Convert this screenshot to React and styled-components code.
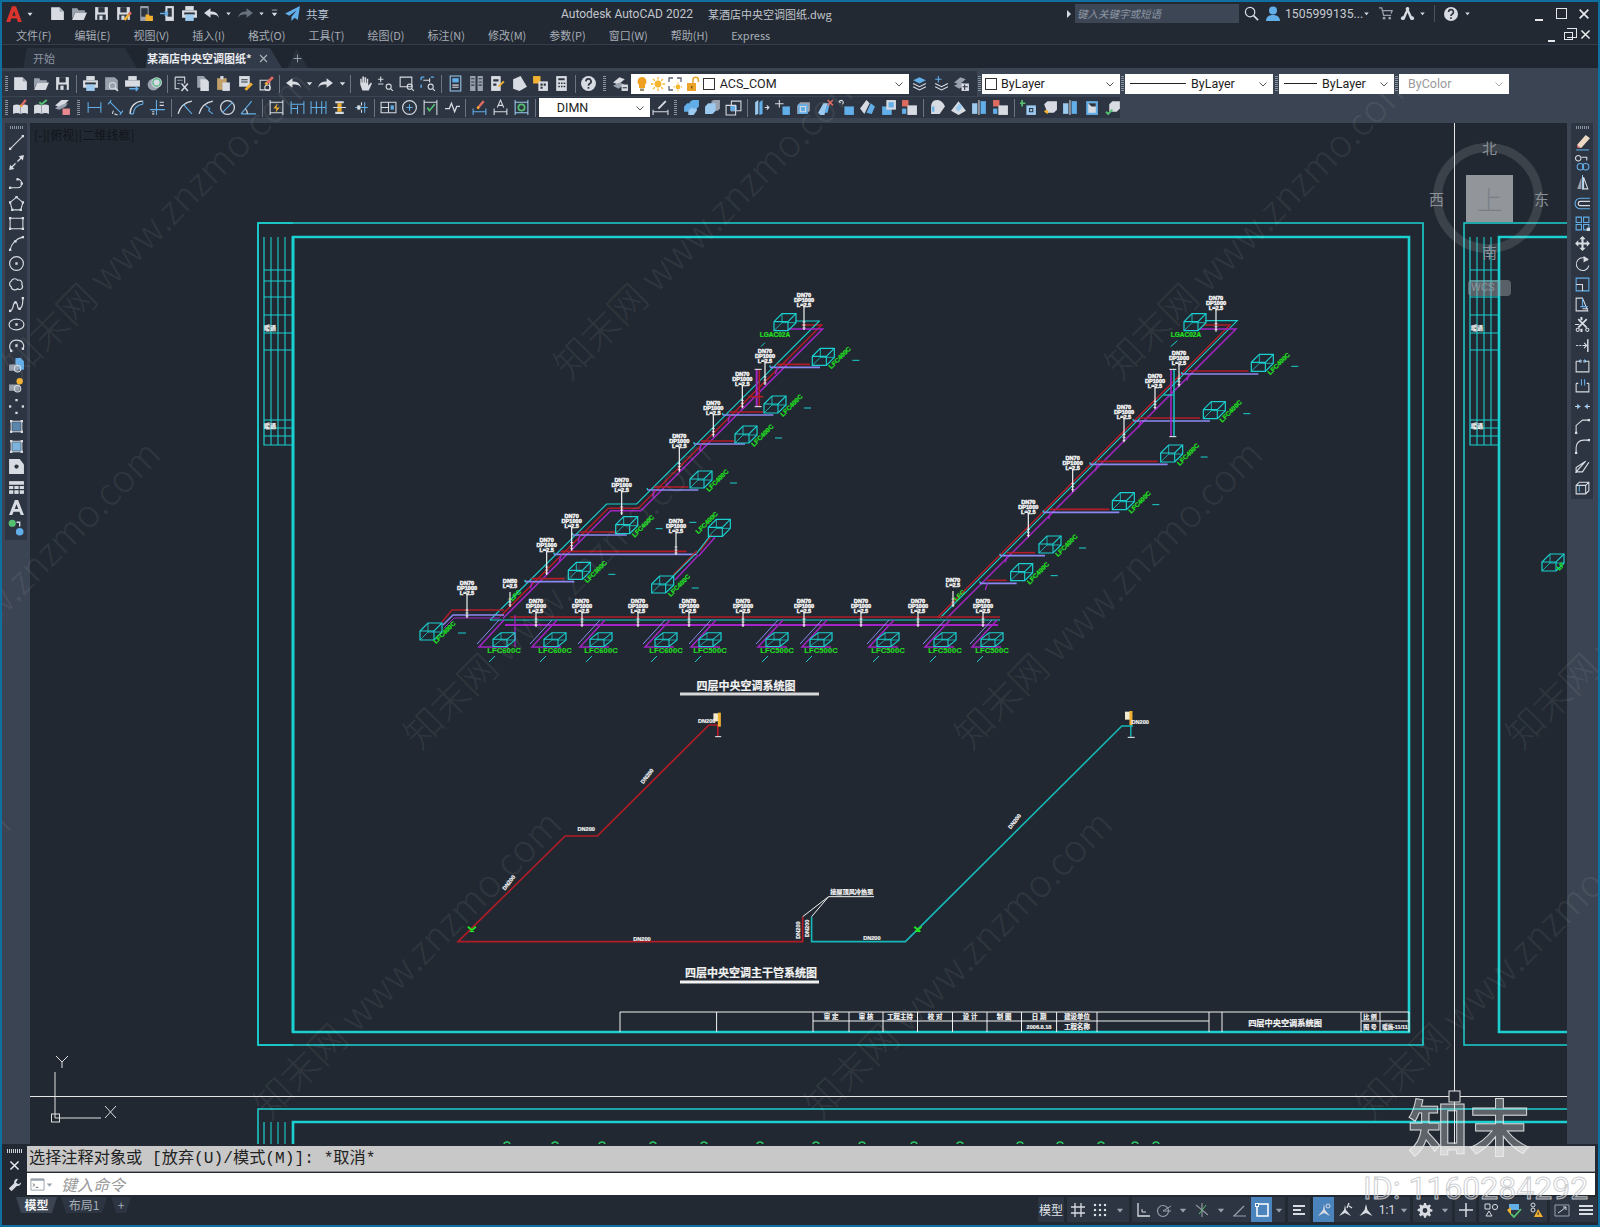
import React from 'react'
import styled, { createGlobalStyle } from 'styled-components'

const UI = `"Noto Sans CJK SC", "Noto Sans", sans-serif`
const LAT = `Roboto, "Noto Sans CJK SC", sans-serif`

const W = '#d8dce2', G = '#98a1ad', B = '#62aee8', Y = '#f0b030', R = '#df6a60', N = '#55c070', K = '#2c3440', C = '#9cc9ee', DIM = '#68717e'
const s = (d, c = W, w) => ({ d, c, w })
const f = (d, c = W) => ({ d, c, fill: true })
const dot = (x, y, c = W) => f(`M${x - 1.1} ${y - 1.1}h2.2v2.2h-2.2z`, c)
const circle = (x, y, r) => `M${x - r} ${y}a${r} ${r} 0 1 0 ${2 * r} 0a${r} ${r} 0 1 0 ${-2 * r} 0`
const save = [f('M2 2h12v12H2z'), f('M5 2h6v5H5z', K), f('M4 9h8v5H4z', K), f('M6 10h3v4H6z')]
const mag = [s(circle(11, 11, 2.4), W), s('M13 13l2 2')]
const dimH = [s('M2 3v10M14 3v10M2 8h12', B)]

const ICONS = {
  logo: [f('M6.2 1h3.6L15 15h-3.6l-1-3H5.6l-1 3H1z', '#d9352c'), f('M8 5.5L6.6 9.5h2.8z', '#222933')],
  caret: [f('M4 6h8l-4 5z')],
  menuC: [s('M4 3h8'), f('M4 7h8l-4 5z')],
  newf: [f('M2 2h8l4 4v8H2z'), f('M10 2v4h4z', G)],
  open: [f('M1 3h5l1 2h6v2H4l-3 6z', G), f('M4 7h11l-3 7H1z')],
  save,
  saveas: [...save, s('M9 14l5-6', Y, 2.4), s('M13 9l2-2', R, 2.4)],
  sheet: [f('M3 1h8v14H3z', G), f('M4 3h6v8H4z', K), f('M8 9h3l1 1h3v5H8z', Y)],
  sheetout: [f('M6 1h8v14H6z'), f('M8 3h4v8H8z', K), s('M1 8h7M5.5 5.5L8 8l-2.5 2.5', B, 1.5)],
  print: [f('M4 1h8v4H4z'), f('M1 5h14v7H1z'), f('M3 7h10v2H3z', K), f('M4 9h8v6H4z', C)],
  undo: [f('M7 3v3c4 0 7 1 8 6-2-3-4-3-8-3v3L1 7.5z')],
  redo: [f('M9 3v3C5 6 2 7 1 12c2-3 4-3 8-3v3l6-4.5z')],
  redoD: [f('M9 3v3C5 6 2 7 1 12c2-3 4-3 8-3v3l6-4.5z', DIM)],
  share: [f('M15 1L1 8l4 2 7-5-5 6v4l3-3 3 2z', B)],
  preview: [f('M2 2h9l3 3v9H2z', G), s(circle(9, 10, 3)), s('M11 12l3 3', W, 1.6)],
  plot: [f('M4 1h8v4H4z'), f('M1 5h14v6H1z'), s('M5 13h8M11 11l2 2-2 2', B, 1.4)],
  globe: [f(circle(7, 9, 5.5), G), f(circle(10, 7, 5), W), s(circle(10, 7, 3.5), '#5bb88a', 1.4)],
  cut: [s('M2 2h9v6M2 2v11h4'), s('M8 8l6 7M14 8l-6 7', W, 1.4), s('M4 5h5M4 8h3', G)],
  copy: [f('M3 1h6l2 2v9H3z', G), f('M6 4h6l2 2v9H6z')],
  paste: [f('M2 3h9v11H2z', '#c2a06a'), f('M5 1h3v3H5z'), f('M7 7h7v8H7z')],
  match: [f('M2 1h10v10H2z'), f('M4 4h6v1H4zM4 6h6v1H4z', K), s('M8 14l6-6', Y, 2.6)],
  brush: [s('M2 5h9v9H2z'), s(circle(9, 12, 2.6)), s('M8 8l6-6', R, 2.6), s('M7 9l1.6-1.6', Y, 2.6)],
  hand: [f('M4 9V3.5h1.4V7H6V1.5h1.5V7H8V2h1.5v5.5h.6V3.5h1.4V10L14 7l1 1-3 6.5H6z')],
  zoomrt: [s('M1 4h5M3.5 1.5v5M1 8.5h5'), ...mag],
  zoomw: [s('M2 2h11v9H2z'), ...mag],
  zoomp: [s('M2 2v3M2 2h3M14 2h-3M2 12v-3', B, 1.3), s('M4 5l6 0M10 3v4', W), ...mag],
  palette: [s('M3 1h10v14H3z', C), f('M5 3h6v4H5z', B), f('M5 9h6v1H5zM5 11h6v1H5z')],
  cols: [f('M2 1h5v14H2zM9 1h5v14H9z', G), f('M3 3h3v1H3zM3 6h3v1H3zM3 9h3v1H3zM10 3h3v1h-3zM10 6h3v1h-3zM10 9h3v1h-3z', K)],
  sheetset: [f('M2 1h9v14H2z'), f('M4 4h5v2H4zM4 8h3v2H4z', K), s('M9 11l5-5', Y, 1.8)],
  tag: [f('M2 4l7-3 6 10-7 4-6-2z')],
  layers2: [f('M1 1h7v7H1z', Y), f('M6 6h9v9H6z'), f('M8 8h2v2H8zM11 8h2v2h-2zM8 11h2v2H8z', K)],
  calc: [f('M3 1h10v14H3z'), f('M5 3h6v2H5zM5 7h1.5v1.5H5zM7.5 7H9v1.5H7.5zM10 7h1.5v1.5H10zM5 10h1.5v1.5H5zM7.5 10H9v1.5H7.5zM10 10h1.5v1.5H10z', K)],
  help: [f(circle(8, 8, 7)), s('M5.6 6a2.4 2.4 0 1 1 3.4 2.2c-.7.4-1 .8-1 1.8', K, 1.6), f('M7.2 11.3h1.6v1.6H7.2z', K)],
  layerprop: [f('M1 7l6-5 5 2-6 5z'), f('M1 10l6-3 5 2-6 4z', G), f('M9 9h6v6H9z'), s('M10 12h4', K)],
  bulb: [f('M8 1a4.5 4.5 0 0 1 3 7.8V12H5V8.8A4.5 4.5 0 0 1 8 1z', '#f0a020'), f('M6 12.5h4V15H6z', '#9a8b6a')],
  sun: [f(circle(8, 8, 3.4), '#f5b52e'), s('M8 1v2.5M8 12.5V15M1 8h2.5M12.5 8H15M3 3l1.8 1.8M11.2 11.2L13 13M3 13l1.8-1.8M11.2 4.8L13 3', '#f5b52e', 1.3)],
  freeze: [s('M2 6V2h4M10 2h4v4M2 10v4h4', '#596270', 1.3), f(circle(11, 11, 2.4), '#f5b52e'), s('M11 6.5v1.4M11 14v1.4M6.5 11h1.4M14 11h1.4', '#f5b52e')],
  lock: [f('M2 7h9v8H2z', '#eba32a'), s('M8 7V4a2.7 2.7 0 0 1 5.4 0v2', '#eba32a', 1.5), f('M6 10h1.4v2.5H6z', '#7a5010')],
  lay1: [f('M2 5l6-3 6 3-6 3z', B), s('M2 8l6 3 6-3M2 11l6 3 6-3', W)],
  lay2: [s('M3 4h6M6 1v6', B), s('M3 8l6 3 6-3M3 11l6 3 6-3')],
  lay3: [f('M1 7l6-5 5 2-6 5z', G), f('M1 10l6-3 5 2-6 4z', G), f('M8 8h7v7H8z'), s('M9 11h5M11 9v5', K)],
  note: [f('M1 6c2-1 5-1 7 0 2-1 5-1 7 0v8c-2-1-5-1-7 0-2-1-5-1-7 0z'), s('M8 6v8', G), s('M8 7l5-6', R, 2.2), s('M8 7l1-1.2', Y, 2.2)],
  noteok: [f('M1 6c2-1 5-1 7 0 2-1 5-1 7 0v8c-2-1-5-1-7 0-2-1-5-1-7 0z'), s('M8 6v8', G), s('M6 3l2 2 5-4', N, 1.8)],
  stackr: [f('M1 9l6-5h6l-2 3-6 3z', G), f('M1 6l6-5h7l-3 3-7 3z'), f('M8 9h7v6H8z', '#e88a90')],
  dimH,
  dimA: [s('M4 1L1 5M15 11l-3 4M3 3l10 10', B), s('M6 11l-1 3M10 15l-3-1', W)],
  dimArc: [s('M2 14c0-7 5-12 12-12', W, 1.4), s('M2 14h3M14 2v3M5 14c0-5 4-9 9-9', B)],
  dimOrd: [s('M7 1v14M1 10h14', B), s('M10 3h4M10 6h4M3 12h2M3 14h2', W)],
  dimRad: [s('M1 14C3 7 8 3 14 2', W, 1.2), s('M14 14L6 5', B)],
  dimJog: [s('M1 14C3 7 8 3 14 2', W, 1.2), s('M14 14l-4-3 1-2-4-3', B)],
  dimDia: [s(circle(8, 8, 6.5), W, 1.2), s('M3 13L13 3', B)],
  dimAng: [s('M1 14h14M1 14L11 2', B), s('M7 14c0-2-1-4-2-5', W)],
  dimQ: [s('M2 1v14M14 1v14M2 3h12M2 13h12', W), f('M9 4L5 9h3l-1 4 4-5H8z', Y)],
  dimBase: [s('M2 2v12M8 6v8M14 2v12M2 5h12M2 9h6', B)],
  dimCont: [s('M1 2v12M6 2v12M11 2v12M15 2v12M1 8h14', B)],
  dimSp: [f('M4 2h8v2H4zM4 12h8v2H4z'), f('M6 4h4v8H6z', Y), s('M2 8h12', W)],
  dimBr: [s('M2 8h12M11 3v10', B), s('M8 3v3M8 10v3', W), f('M4 6h3v4H4z')],
  tol: [s('M1 3h14v10H1z'), s('M8 3v10M1 8h7', W), f('M10 6h3v4h-3z', B)],
  center: [s(circle(8, 8, 6.5), W, 1.1), s('M8 5v6M5 8h6', B)],
  insp: [s('M2 1v14M14 1v14M2 3h12', W), s('M5 8l2 3 5-6', N, 1.6)],
  jogL: [s('M1 9h4l2-5 3 8 2-5h3', W, 1.2)],
  dedit: [s('M2 9v6M14 9v6M2 12h12', B), s('M6 9l6-7', R, 2.2), s('M6 9l1.5-1.6', Y, 2.2)],
  dtext: [s('M2 9v6M14 9v6M2 12h12', W), s('M5 8l3-7 3 7M6 6h4', W)],
  dupd: [s('M2 1v14M14 1v14M2 3h12M2 13h12', C), s(circle(8, 8, 3), N, 1.6)],
  dstyle: [s('M1 10v5M15 10v5M1 12h14', W), s('M6 9l7-7', W, 1.8)],
  sUnion: [f('M1 7l3-3h5v5l-3 3H1z', B), f('M5 11l3-3h5v3l-3 4H5z', C), f('M6 3l3-2h6v6l-2 2H9z', B)],
  sSub: [f('M7 2l2-1h6v8l-2 2H7z', G), f('M1 7l3-3h7v7l-3 3H1z', C)],
  sInt: [s('M6 2h9v9H6z'), f('M5 6h6v5H5z', B), s('M1 6h9v9H1z')],
  sPress: [f('M2 3l3-2v13l-3 1z', C), f('M6 3l3-2v13l-3 1z', B), s('M11 8h4M13 6l2 2-2 2')],
  sMove: [s('M5 1v7M1 4.5h8'), f('M8 7h7v8H8z', B)],
  sBox: [f('M2 6l3-3h9v8l-3 3H2z', G), f('M3 5h9v9H3z', B), s('M5 7h5v5H5z')],
  sDel: [f('M1 13l5-9h4l-3 11H3z', C), f('M7 13l3-9h2l-2 9z', B), s('M10 1l5 5M15 1l-5 5', R, 1.4)],
  sRot: [s('M1 3a2 2 0 1 1 3 2M1 3h2'), f('M6 7h9v8H6z', B)],
  sTilt: [f('M1 9l6-8 3 3-5 10z'), f('M7 13l4-9 4 3-3 7z', B)],
  sCopy: [f('M2 7h9v8H2z', B), f('M6 1h9v9H6z', W), f('M8 3h5v5H8z', B)],
  sCol: [f('M1 1h6v6H1z', R), f('M6 6h9v9H6z', W), f('M1 9h4v5H1z', B)],
  sCur: [f('M2 14V6a6 6 0 0 1 6-5c3 0 6 3 7 6l-5 7z'), s('M4 12V7', B, 2)],
  sEra: [f('M1 11l7-9 7 9-7 4z'), f('M5 9l4-5 3 3-4 5z', C)],
  sSplit: [f('M1 4h5v10H1z', C), f('M9 2h5v12H9z', B), s('M7.5 1v14')],
  sAdd: [s('M2 1v6M-1 4h6', N, 1.6), f('M6 6h9v9H6z', C), s('M9 9h3v3H9z', K)],
  sShell: [f('M3 2h11v13H3z', B), f('M5 4h7v9H5z'), f('M5 4l3 3h4V4z', K)],
  sSweep: [f('M3 5l3-3h9v8l-3 3H6z'), f('M3 12a2 2 0 1 1 3 2z', Y)],
  sChk: [f('M4 5l3-3h7v7l-3 3H4z'), s('M1 12l2 2 4-4', N, 1.8)],
  line: [s('M2 14L14 2'), dot(2, 14), dot(14, 2)],
  xline: [s('M3 13L13 3', W, 1.2), f('M15 1l-1 5-4-4zM1 15l5-1-4-4z'), dot(8, 8, K)],
  pline: [s('M2 13h7c5 0 5-8 0-8'), dot(2, 13), dot(9, 5), dot(13, 9)],
  polygon: [s('M8 2l6 5-2 7H4L2 7z'), dot(8, 2), dot(14, 7), dot(2, 7), dot(4, 14), dot(12, 14)],
  rect: [s('M2 3h12v10H2z'), dot(2, 3), dot(14, 3), dot(2, 13), dot(14, 13)],
  arc: [s('M2 14C3 8 8 3 14 2'), dot(2, 14), dot(7, 6), dot(14, 2)],
  circle: [s(circle(8, 8, 6.5), W, 1.1), dot(8, 8)],
  cloud: [s('M3 5c1-3 5-3 6-1 3-1 5 2 4 4 2 3-1 6-4 4-2 2-6 1-6-2-2-1-2-4 0-5z', W, 1.1)],
  spline: [s('M2 14c4-1 2-8 5-8s1 7 4 6 3-9 3-10', W, 1.1), dot(2, 14), dot(7, 6), dot(11, 12), dot(14, 2)],
  ellipse: [s('M1 8c0-3 3-5 7-5s7 2 7 5-3 5-7 5-7-2-7-5z', W, 1.1), dot(8, 8)],
  ellarc: [s('M3 13C0 9 2 3 8 3s8 5 6 8', W, 1.1), dot(8, 8), dot(3, 13), dot(14, 11)],
  insert: [f('M7 1h5l3 3v8H7z', B), f('M1 7h9v6H1z', G), s(circle(9, 11, 3))],
  block: [f('M1 7h10v6H1z', G), f(circle(11, 4, 3), Y), s(circle(9, 11, 3))],
  point: [dot(8, 2), dot(2, 8), dot(14, 8), dot(8, 14)],
  hatch: [s('M3 3h10v10H3z'), f('M4 4h8v8H4z', '#5a86ac'), dot(3, 3), dot(13, 3), dot(3, 13), dot(13, 13)],
  grad: [s('M3 3h10v10H3z'), f('M4 4h8v8H4z', '#7eb3dd'), dot(3, 3), dot(13, 3), dot(3, 13), dot(13, 13)],
  region: [f('M1 1h10l4 5v9H1z'), f(circle(8, 8, 2), K)],
  table: [f('M1 2h14v12H1z'), s('M1 6h14M1 10h14M5.5 6v8M10.5 6v8', K)],
  mtext: [f('M6.5 1h3L15 15h-3l-1.2-3H5.2L4 15H1zM8 5L6.3 9.5h3.4z')],
  addsel: [f(circle(4, 4, 3.4), N), s('M8 3h3v4', W, 1.3), f(circle(11, 12, 3.6), B)],
  erase: [s('M2 15h12', B), f('M3 10l8-9 4 3-8 9H4z', '#ecd9c4'), f('M3 10l3 3H3z', R)],
  ocopy: [s(circle(4, 4, 2.6)), s('M7 3h5v3'), s(circle(6, 12, 3), B), s(circle(11, 12, 3), B)],
  mirror: [f('M3 14L7 3v11z', G), s('M13 14L9 3v11z', W), s('M8 1v14', C)],
  offset: [s('M15 3H6a4.5 4.5 0 0 0 0 10h9', B), s('M15 6H6a2 2 0 0 0 0 4h9')],
  array: [s('M2 2h5v5H2zM9 2h5v5H9zM2 9h5v5H2zM9 9h5v5H9z', B), f('M12 12h3v3h-3z')],
  move: [f('M8 1l3 3H9v3h3V5l3 3-3 3V9H9v3h2l-3 3-3-3h2V9H4v2L1 8l3-3v2h3V4H5z')],
  rotate: [s('M13 5a6 6 0 1 0 1 5'), f('M9 1l5 3-5 3z')],
  scale: [s('M2 2h12v12H2z', B), s('M2 8h6v6')],
  stretch: [s('M2 2h6l5 12H2z'), s('M8 2v8M6 10h7', B), s('M8 12h5', W)],
  trim: [s('M7 1v3M7 12v3', W, 2), s('M1 8h4', W), s('M4 3l8 8M12 3l-8 8', W, 1.6), s(circle(3.5, 13, 1.5)), s(circle(12.5, 13, 1.5))],
  extend: [s('M13 2v12', W, 1.4), s('M2 8h2M5 8h2M8 8h4M9.5 5.5L12 8l-2.5 2.5')],
  break1: [s('M2 4v10h12V4H10M2 4h4'), dot(6, 4), dot(10, 4), s('M10 2v3M6 2v3', B)],
  break2: [s('M2 6v8h12V6M2 6h2M12 6h2'), s('M7 2v6M10 2v6', B)],
  join: [s('M1 8h5M10 8h5', W), f('M6 8l-3-2.5v5zM10 8l3-2.5v5z', C)],
  chamfer: [s('M2 14V7l6-5h6', W), dot(2, 14), dot(14, 2)],
  fillet: [s('M2 14V9c0-4 3-7 7-7h5', W), dot(2, 14), dot(14, 2)],
  pedit: [s('M2 14V9l9-6-9 10h6l6-9', W, 1.1)],
  explode: [s('M2 6l3-3h9v8l-3 3H2zM2 6h9v8M11 6l3-3'), s('M5 6v6', B)],
  search: [s(circle(6.5, 6.5, 5), W, 1.3), s('M10 10l5 5', W, 1.8)],
  user: [f(circle(8, 4.5, 4), B), f('M1 15c0-4 3-6 7-6s7 2 7 6z', B)],
  cart: [s('M1 2h3l2 8h8M5 5h10l-1 3', G, 1.4), f(circle(6.5, 13, 1.5), G), f(circle(12.5, 13, 1.5), G)],
  aIcon: [f('M8 1L14 14H11L8 7 5 14H2z'), f(circle(3, 13, 2)), f(circle(13, 13, 2)), f(circle(8, 3, 2))],
  cmdbox: [s('M1 2h14v12H1z', G), f('M1 2h14v2H1z', G), s('M3 7l2 1.5L3 10M6 11h3', '#666')],
  wrench: [f('M11 1a4 4 0 0 0-4 5L1 12l3 3 6-6a4 4 0 0 0 5-4l-3 2-3-2 2-3z')],
  close: [s('M3 3l10 10M13 3L3 13', W, 1.8)],
  grid: [s('M5 1v14M11 1v14M1 5h14M1 11h14', W, 1.3)],
  dots: [dot(3, 3), dot(8, 3), dot(13, 3), dot(3, 8), dot(8, 8), dot(13, 8), dot(3, 13), dot(8, 13), dot(13, 13)],
  ortho: [s('M3 1v13h12', W, 1.3), s('M7 7v3h4', W, 1)],
  polar: [s(circle(7, 9, 5.5), G, 1.1), s('M7 9l8-5M7 9h8', G)],
  iso: [s('M8 1v14M2 3l12 10', '#8d949e', 1.2), s('M12 3L5 12', N, 1)],
  snapang: [s('M1 14h13M2 14L12 4', G, 1.2)],
  osnap: [s('M3 2h11v12H3z', '#fff', 1.5), f('M1 1h4v4H1z', '#fff'), f('M2 2h2v2H2z', '#3c78b8')],
  lwt: [f('M2 3h12v2H2z'), f('M2 7h8v2H2z'), f('M2 11h12v2H2z')],
  anno: [f('M8 2l1 6 5 6-6-3-6 3 5-6z'), s(circle(12, 4, 2))],
  anno2: [f('M8 3l1 5 5 6-6-3-6 3 5-6z'), s('M12 1l-2 5M12 4l3 2', '#d8dce2', 1.4)],
  anno3: [f('M8 2l1.5 6 5 6-6.5-3-6.5 3 5-6z')],
  gear: [f('M7 1h2l.4 2 1.5.6L12.6 2.4 14 3.8 12.8 5.5l.6 1.5 2 .4v2l-2 .4-.6 1.5 1.2 1.7-1.4 1.4-1.7-1.2-1.5.6-.4 2H7l-.4-2-1.5-.6-1.7 1.2L2 12.6l1.2-1.7-.6-1.5-2-.4v-2l2-.4.6-1.5L2 3.8 3.4 2.4l1.7 1.2L6.6 3z'), f(circle(8, 8.5, 2.4), K)],
  plus: [s('M8 1v14M1 8h14', W, 1.5)],
  isodraft: [s('M2 2h5v5H2z'), s('M3 14l3-5 3 5z'), s(circle(12, 5, 2.6))],
  hw: [f('M3 2h10v6H3z', B), f('M1 8l4-3v8z', Y), s('M5 12l3 3 7-8', N, 1.8)],
  clean: [s(circle(5, 3, 2)), s(circle(5, 8, 2)), f('M10 7l5 8H6z', Y), f('M9.6 10h1v3h-1z', K)],
  iso2: [s('M1 3h14v11H1z', G), s('M7 9l5-4M9 5h3v3M4 11l3-2', W)],
  custom: [f('M1 3h14v2H1zM1 7h14v2H1zM1 11h14v2H1z')],
  caretS: [f('M3 6h10l-5 6z', G)],
}

const Svg = styled.svg`
  display: block;
  flex: none;
`

const Icon = ({ name, size = 17, color }) => (
  <Svg width={size} height={size} viewBox="0 0 16 16">
    {(ICONS[name] || []).map((p, i) => (
      <path
        key={i}
        d={p.d}
        fill={p.fill ? color || p.c : 'none'}
        stroke={p.fill ? 'none' : color || p.c}
        strokeWidth={p.w || 1}
      />
    ))}
  </Svg>
)

const GlobalStyle = createGlobalStyle`
  html, body { margin: 0; padding: 0; background: #222933; }
  * { box-sizing: border-box; }
`

const Root = styled.div`
  position: relative;
  width: 1600px;
  height: 1227px;
  overflow: hidden;
  border: 2px solid #0e6fa0;
  background: #222933;
  display: grid;
  grid-template-rows: 23px 20px 23px 55px 1021px 52px 29px;
  font-family: ${UI};
`

const TitleBar = styled.div`
  display: flex;
  align-items: center;
  padding-right: 3px;
`

const Cell = styled.div`
  width: ${p => p.$w || 21.2}px;
  flex: none;
  display: flex;
  align-items: center;
  justify-content: center;
  margin-left: ${p => p.$ml || 0}px;
`

const QuickAccess = styled.div`
  display: flex;
  align-items: center;
  padding-left: 2px;
  width: 327px;
  flex: none;
`

const ShareText = styled.span`
  font-size: 11.5px;
  color: #b8c6d6;
  margin-left: 3px;
  white-space: nowrap;
`

const TitleSlot = styled.div`
  width: 734px;
  flex: none;
  padding-left: 232px;
  color: #c2c6cc;
  white-space: nowrap;
  font-size: 11px;
  display: flex;
  align-items: center;
  gap: 15px;
`

const TitleApp = styled.span`
  font-family: ${LAT};
  font-size: 12px;
`

const SearchBox = styled.div`
  width: 164px;
  height: 19px;
  margin-left: 4px;
  background: #3d4655;
  color: #8d96a3;
  font-style: italic;
  font-size: 10.5px;
  line-height: 19px;
  padding-left: 2px;
`

const Arrow = styled.div`
  width: 0;
  height: 0;
  margin-left: 4px;
  border-left: 4px solid #d8dce2;
  border-top: 4px solid transparent;
  border-bottom: 4px solid transparent;
`

const UserName = styled.span`
  width: 76px;
  margin-left: 1px;
  font-family: ${LAT};
  font-size: 12.2px;
  color: #c6cad0;
  white-space: nowrap;
`

const VRule = styled.div`
  width: 1px;
  height: 17px;
  margin: 0 6px 0 8px;
  background: #4a5362;
`

const WinControls = styled.div`
  margin-left: auto;
  display: flex;
  align-items: center;
`

const WinBtn = styled.div`
  width: ${p => p.$w || 23}px;
  flex: none;
  display: flex;
  justify-content: center;
  align-items: center;
  height: 14px;
`

const MinGlyph = styled.div`
  width: ${p => p.$w || 8}px;
  height: 2px;
  background: #e4e6ea;
  align-self: flex-end;
`

const MaxGlyph = styled.div`
  width: 11px;
  height: 11px;
  border: 1.5px solid #e4e6ea;
`

const RestoreGlyph = styled.div`
  position: relative;
  width: 9px;
  height: 8px;
  margin-top: 3px;
  border: 1.5px solid #e4e6ea;
  &::after {
    content: '';
    position: absolute;
    left: 2px;
    top: -5px;
    width: 9px;
    height: 8px;
    border: 1.5px solid #e4e6ea;
    border-left: 0;
  }
`

const MenuBar = styled.div`
  display: flex;
  align-items: center;
  gap: 23px;
  padding: 0 4px 0 14px;
  font-size: 11px;
  color: #a7adb6;
  border-bottom: 1px solid #343c49;
`

const MenuItem = styled.span`
  white-space: nowrap;
`

const TabBar = styled.div`
  display: flex;
  align-items: flex-end;
  background: #1f2630;
  padding: 3px 0 0 14px;
  font-size: 11px;
`

const Tab = styled.div`
  height: 20px;
  width: ${p => p.$w}px;
  margin-left: ${p => p.$ml || 0}px;
  padding-left: ${p => p.$pl || 0}px;
  display: flex;
  align-items: center;
  white-space: nowrap;
  color: ${p => (p.$active ? '#e8eaee' : '#8d95a1')};
  font-weight: ${p => (p.$active ? 700 : 400)};
  background: ${p => (p.$active ? '#323b49' : '#29313d')};
  clip-path: polygon(6% 100%, 11px 0, calc(100% - 12px) 0, 100% 100%);
`

const TabClose = styled.span`
  margin-left: 6px;
  display: flex;
`

const Band = styled.div`
  background: #3b4452;
  padding-top: 3px;
  display: flex;
  flex-direction: column;
  gap: 1px;
`

const BandRow = styled.div`
  display: flex;
  align-items: center;
  height: ${p => p.$h}px;
`

const Toolbar = styled.div`
  display: flex;
  align-items: center;
  height: 100%;
  background: #2d3542;
  width: ${p => p.$w}px;
  flex: none;
`

const Grip = styled.div`
  flex: none;
  width: ${p => p.$w || 8}px;
  height: 15px;
  display: flex;
  justify-content: center;
  &::before {
    content: '';
    width: 3px;
    height: 100%;
    background: repeating-linear-gradient(to bottom, #8a93a0 0 1px, transparent 1px 2px);
  }
`

const Sep = styled.div`
  flex: none;
  width: 6.3px;
  height: 18px;
  display: flex;
  justify-content: center;
  &::before {
    content: '';
    width: 1px;
    height: 100%;
    background: #6a7482;
  }
`

const Drop = styled.div`
  flex: none;
  width: ${p => p.$w}px;
  height: ${p => p.$h || 20}px;
  background: #fff;
  display: flex;
  align-items: center;
  padding: 0 5px 0 ${p => p.$pl || 2}px;
  font-family: ${LAT};
  font-size: 12.5px;
  color: ${p => p.$muted ? '#9a9a9a' : '#1e1e1e'};
`

const DropSwatch = styled.div`
  width: 12px;
  height: 12px;
  border: 1px solid #333;
  flex: none;
  margin: 0 ${p => p.$r || 4}px 0 1px;
`

const DropLine = styled.div`
  width: ${p => p.$w}px;
  height: 1px;
  background: #222;
  flex: none;
  margin: 0 ${p => p.$r}px 0 ${p => p.$l}px;
`

const Chevron = styled.svg`
  margin-left: auto;
  flex: none;
`

const Main = styled.div`
  display: flex;
  min-height: 0;
`

const Rail = styled.div`
  width: ${p => p.$w}px;
  flex: none;
  background: #3b4452;
  padding: 0 ${p => p.$pr}px 0 ${p => p.$pl}px;
`

const RailTools = styled.div`
  background: #2d3542;
  display: flex;
  flex-direction: column;
  align-items: center;
  padding-top: 2px;
  padding-bottom: 2px;
`

const RailCell = styled.div`
  height: 20.3px;
  display: flex;
  align-items: center;
  justify-content: center;
`

const RailGrip = styled.div`
  width: 13px;
  height: 3px;
  margin: 1px 0 3px;
  background: repeating-linear-gradient(to right, #8a93a0 0 1px, transparent 1px 2px);
`

const Canvas = styled.div`
  position: relative;
  flex: 1;
  overflow: hidden;
  background: #212831;
`

const Drawing = styled.svg`
  display: block;
  width: 100%;
  height: 100%;
  font-family: "Liberation Sans", "Noto Sans CJK SC", sans-serif;
`

const ViewTag = styled.div`
  position: absolute;
  left: 4px;
  top: 3px;
  font-size: 12px;
  color: #11151b;
`

const CubeRing = styled.div`
  position: absolute;
  left: 1403px;
  top: 20px;
  width: 110px;
  height: 110px;
  border-radius: 50%;
  border: 9px solid rgba(190, 195, 200, 0.17);
`

const CubeFace = styled.div`
  position: absolute;
  left: 1436px;
  top: 52px;
  width: 47px;
  height: 47px;
  background: rgba(190, 192, 196, 0.72);
  display: flex;
  align-items: center;
  justify-content: center;
  font-size: 26px;
  font-weight: 300;
  color: #7a7f87;
  font-family: ${UI};
`

const CubeDir = styled.div`
  position: absolute;
  left: ${p => p.$x}px;
  top: ${p => p.$y}px;
  font-size: 15px;
  line-height: 18px;
  color: #8b9098;
`

const WcsPill = styled.div`
  position: absolute;
  left: 1438px;
  top: 157px;
  width: 43px;
  height: 16px;
  border-radius: 4px;
  background: rgba(170, 175, 182, 0.42);
  color: #8d939b;
  font-family: ${LAT};
  font-size: 11px;
  line-height: 16px;
  padding-left: 3px;
`

const Command = styled.div`
  display: flex;
  padding: 2px 3px 1px 0;
`

const CmdSide = styled.div`
  width: 25px;
  flex: none;
  display: flex;
  flex-direction: column;
  align-items: center;
`

const CmdGrip = styled.div`
  width: 16px;
  height: 4px;
  margin: 3px 0 3px;
  background: repeating-linear-gradient(to right, #cfd3d8 0 1px, transparent 1px 2px);
`

const CmdSideBtn = styled.div`
  height: ${p => p.$h}px;
  display: flex;
  align-items: center;
`

const CmdCol = styled.div`
  flex: 1;
  display: flex;
  flex-direction: column;
`

const CmdHistory = styled.div`
  height: 26px;
  background: #c8c8c8;
  border-bottom: 1px solid #8a8a8a;
  font-family: "Liberation Mono", "Noto Sans CJK SC", monospace;
  font-size: 16.2px;
  line-height: 27px;
  padding-left: 2px;
  color: #222;
  white-space: pre;
`

const CmdInput = styled.div`
  height: 22px;
  background: #fff;
  display: flex;
  align-items: center;
  padding-left: 3px;
  margin-top: 1px;
  color: #9a9a9a;
  font-style: italic;
  font-size: 16px;
`

const CmdPrompt = styled.span`
  margin-left: 7px;
`

const StatusBar = styled.div`
  display: flex;
  justify-content: space-between;
  padding: 1px 1px 3px 14px;
`

const LayoutTabs = styled.div`
  display: flex;
  align-items: flex-start;
  gap: 4px;
`

const LayoutTab = styled.div`
  width: ${p => p.$w}px;
  height: 16px;
  font-size: 12px;
  line-height: 16px;
  text-align: center;
  color: ${p => (p.$active ? '#f0f2f4' : '#a7adb6')};
  font-weight: ${p => (p.$active ? 700 : 400)};
  background: ${p => (p.$active ? '#3b4452' : '#2d3542')};
  clip-path: polygon(5px 100%, 0 0, 100% 0, calc(100% - 5px) 100%);
`

const StatusTools = styled.div`
  display: flex;
  gap: 3px;
`

const StatusGroup = styled.div`
  display: flex;
  align-items: center;
  background: #2d3542;
  height: 100%;
`

const StatusCell = styled.div`
  width: ${p => p.$w || 21}px;
  height: 100%;
  display: flex;
  align-items: center;
  justify-content: center;
  background: ${p => (p.$on ? '#4b83bd' : 'transparent')};
  color: #d8dce2;
  font-size: 12px;
  font-family: ${LAT};
  flex: none;
`

const StatusLabel = styled(StatusCell)`
  font-family: ${UI};
  color: #dfe2e6;
`

const Watermark = styled.span`
  position: absolute;
  font-family: "Noto Sans CJK SC", "Noto Sans", sans-serif;
  font-size: 38px;
  line-height: 1;
  font-weight: 300;
  white-space: pre;
  color: rgba(255, 255, 255, 0.085);
  transform: rotate(-45deg);
  transform-origin: 0 100%;
  pointer-events: none;
`

const BrandMark = styled.div`
  position: absolute;
  left: 1406px;
  top: 1085px;
  font-size: 61px;
  line-height: 76px;
  font-family: ${UI};
  font-weight: 700;
  color: rgba(255, 255, 255, 0.28);
  -webkit-text-stroke: 1px rgba(235, 238, 240, 0.85);
  white-space: nowrap;
`

const BrandId = styled.div`
  position: absolute;
  left: 1361px;
  top: 1167px;
  font-family: Roboto, sans-serif;
  font-size: 32px;
  line-height: 38px;
  color: rgba(255, 255, 255, 0.2);
  -webkit-text-stroke: 1px rgba(198, 200, 204, 0.9);
  white-space: nowrap;
`

/* toolbar contents */
const ROW1 = ['grip', 'newf', 'open', 'save', 'sep', 'print', 'preview', 'plot', 'globe', 'sep', 'cut', 'copy', 'paste', 'match', 'brush', 'sep', 'undo', 'caret', 'redo', 'caret', 'sep', 'hand', 'zoomrt', 'zoomw', 'zoomp', 'sep', 'palette', 'cols', 'sheetset', 'tag', 'layers2', 'calc', 'sep', 'help', 'grip', 'layerprop']
const ROW2A = ['grip', 'note', 'noteok', 'stackr', 'grip', 'dimH', 'dimA', 'dimArc', 'dimOrd', 'sep', 'dimRad', 'dimJog', 'dimDia', 'dimAng', 'sep', 'dimQ', 'dimBase', 'dimCont', 'dimSp', 'dimBr', 'sep', 'tol', 'center', 'insp', 'jogL', 'sep', 'dedit', 'dtext', 'dupd', 'sep']
const ROW2B = ['dstyle', 'grip', 'sUnion', 'sSub', 'sInt', 'sep', 'sPress', 'sMove', 'sBox', 'sDel', 'sRot', 'sTilt', 'sCopy', 'sCol', 'sep', 'sCur', 'sEra', 'sSplit', 'sCol', 'sep', 'sAdd', 'sSweep', 'sSplit', 'sShell', 'sChk']
const LEFT_TOOLS = ['line', 'xline', 'pline', 'polygon', 'rect', 'arc', 'circle', 'cloud', 'spline', 'ellipse', 'ellarc', 'insert', 'block', 'point', 'hatch', 'grad', 'region', 'table', 'mtext', 'addsel']
const RIGHT_TOOLS = ['erase', 'ocopy', 'mirror', 'offset', 'array', 'move', 'rotate', 'scale', 'stretch', 'trim', 'extend', 'break1', 'break2', 'join', 'chamfer', 'fillet', 'pedit', 'explode']
const MENU = ['文件(F)', '编辑(E)', '视图(V)', '插入(I)', '格式(O)', '工具(T)', '绘图(D)', '标注(N)', '修改(M)', '参数(P)', '窗口(W)', '帮助(H)', 'Express']

const renderTools = list => list.map((t, i) => {
  if (t === 'grip') return <Grip key={i} $w={i === 0 ? 8 : 10} />
  if (t === 'sep') return <Sep key={i} />
  if (t === 'caret') return <Cell key={i} $w={11}><Icon name="caret" size={11} /></Cell>
  return <Cell key={i}><Icon name={t} /></Cell>
})

const ChevronDown = ({ color = '#555' }) => (
  <Chevron width="10" height="10" viewBox="0 0 10 10">
    <path d="M1.5 3.5L5 7l3.5-3.5" fill="none" stroke={color} strokeWidth="1" />
  </Chevron>
)

/* drawing */
const CY = '#1bd0d0', RD = '#b01c28', PU = '#a326c4', VI = '#8c88f2', GR = '#22e022', WH = '#f2f2f2'

const Poly = ({ pts, c, w = 1.5 }) => (
  <polyline points={pts.map(p => p.join(',')).join(' ')} fill="none" stroke={c} strokeWidth={w} />
)

const Ahu = ({ x, y, sx = 1, sy = 1 }) => (
  <g transform={`translate(${x} ${y}) scale(${sx} ${sy})`} fill="none" stroke={CY} strokeWidth="1.2">
    <path d="M-11 8V-1L-3 -9H11V0L3 8Z" />
    <path d="M-11 -1H3L11 -9M3 -1V8" strokeWidth="1.1" />
    <path d="M-11 8L-3 0H11M-3 -9V0" strokeWidth="0.8" />
  </g>
)

const SmallText = styled.text`
  font-family: "Liberation Sans", "Noto Sans CJK SC", sans-serif;
  font-weight: 700;
  fill: ${p => p.$c || WH};
  stroke: ${p => p.$c || WH};
  stroke-width: ${p => p.$sw || 0.2}px;
`

const TagPole = ({ x, top, bottom, lines = ['DN70', 'DP1000', 'L=2.5'] }) => (
  <g>
    <line x1={x} y1={top + 14} x2={x} y2={bottom} stroke={WH} strokeWidth="1.2" />
    <path d={`M${x - 1.5} ${bottom - 8}h3M${x - 1.5} ${bottom - 5}h3M${x - 1.5} ${bottom - 2}h3`} stroke={WH} strokeWidth="0.8" />
    {lines.map((l, i) => (
      <SmallText key={i} $sw={0.45} x={x} y={top + 5 + i * 5} fontSize="5.6" textAnchor="middle">{l}</SmallText>
    ))}
  </g>
)

const GreenTag = ({ x, y, text = 'LFC400C', size = 6.5 }) => (
  <SmallText $c={GR} x={x} y={y} fontSize={size} textAnchor="middle" transform={`rotate(-45 ${x} ${y})`}>{text}</SmallText>
)

const z3 = (ox, oy) => (x, y) => [ox + x / 3, oy + y / 3]

const Branch = ({ m, y, x0, x1, noTick }) => (
  <g>
    <Poly pts={[m(x0 + 20, y - 9), m(x1 - 30, y - 9)]} c={RD} w={1.6} />
    <Poly pts={[m(x0, y), m(x1, y)]} c={VI} w={1.6} />
    <Poly pts={[m(x0, y), m(x0, y - 6)]} c={CY} w={1.2} />
    {!noTick && <Poly pts={[m(x0 + 22, y), m(x0 + 16, y + 20)]} c={PU} w={1.4} />}
  </g>
)

const UnitTag = ({ m, bx, by, flip, text }) => {
  const [x, y] = m(bx, by)
  return (
    <g>
      <Ahu x={x} y={y} />
      {flip ? (
        <g>
          <GreenTag x={x - 11} y={y - 4} text={text} />
          <path d={`M${x - 30} ${y - 6}h7`} stroke={CY} strokeWidth="1" />
        </g>
      ) : text ? (
        <g>
          <GreenTag x={x + 18} y={y + 2} text={text} />
          <path d={`M${x + 29} ${y + 3}h7`} stroke={CY} strokeWidth="1" />
        </g>
      ) : null}
    </g>
  )
}

const LeftSystem = () => {
  const m = z3(500, 280)
  const branches = [[262, 810, 960], [405, 668, 820], [492, 582, 735], [630, 442, 595], [765, 218, 380], [823, 162, 590], [905, 75, 223]]
  const units = [[970, 232, 'LFC400C'], [825, 375, 'LFC400C'], [738, 465, 'LFC400C'], [603, 600, 'LFC400C'], [380, 737, 'LFC400C'], [238, 874, 'LFC300C'], [488, 915, 'LFC400C']]
  const poles = [[912, 35, 150], [795, 205, 315], [727, 272, 385], [640, 360, 470], [538, 460, 575], [365, 590, 705], [215, 698, 812], [528, 715, 825], [140, 772, 885]]
  return (
    <g>
      <Poly pts={[m(0, 1010), m(325, 685), m(415, 685), m(965, 135), m(905, 135)]} c={RD} />
      <Poly pts={[m(-30, 1020), m(320, 672), m(410, 672), m(958, 123), m(885, 123)]} c={CY} w={1.1} />
      <Poly pts={[m(9, 1015), m(332, 692), m(423, 692), m(968, 147), m(865, 147)]} c={PU} />
      {branches.map(([y, a, b]) => <Branch key={y} m={m} y={y} x0={a} x1={b} />)}
      <Poly pts={[m(600, 812), m(635, 765)]} c={RD} />
      <Poly pts={[m(590, 820), m(628, 770)]} c={CY} w={1.1} />
      <Poly pts={[m(596, 828), m(645, 772)]} c={PU} />
      <Poly pts={[m(591, 812), m(520, 885)]} c={RD} />
      <Poly pts={[m(585, 823), m(515, 893)]} c={CY} w={1.1} />
      <Poly pts={[m(595, 826), m(525, 900)]} c={PU} />
      {units.map(([x, y, t]) => <UnitTag key={x} m={m} bx={x} by={y} text={t} />)}
      <UnitTag m={m} bx={658} by={745} flip text="LFC400C" />
      <UnitTag m={m} bx={855} by={128} text="" />
      <Poly pts={[m(770, 268), m(770, 380)]} c={PU} w={2} />
      <Poly pts={[m(778, 268), m(778, 380)]} c={RD} w={1.6} />
      <Poly pts={[m(745, 350), m(790, 350)]} c={RD} w={1.6} />
      <path d={`M${m(764, 268).join(' ')}h7M${m(764, 380).join(' ')}h7`} stroke={WH} strokeWidth="1" />
      {poles.map(([x, t, b]) => { const [px, py] = m(x, t); return <TagPole key={x} x={px} top={py} bottom={m(x, b)[1]} /> })}
      <SmallText $c={GR} x={m(825, 172)[0]} y={m(825, 172)[1]} fontSize="6.5" textAnchor="middle">LGAC02A</SmallText>
      <Poly pts={[m(783, 200), m(795, 188)]} c={CY} w={1} />
    </g>
  )
}

const RightSystem = () => {
  const m = z3(1000, 280)
  const branches = [[282, 545, 775], [423, 400, 630], [553, 270, 503], [697, 130, 358], [827, 0, 135], [910, -60, 50]]
  const units = [[787, 250], [643, 392], [515, 522], [370, 665], [150, 795], [65, 878]]
  const poles = [[648, 45, 155], [537, 210, 320], [465, 280, 388], [372, 372, 487], [218, 525, 635], [85, 658, 772]]
  return (
    <g>
      <Poly pts={[m(-189, 1014), m(690, 135), m(610, 135)]} c={RD} />
      <Poly pts={[m(-180, 1014), m(712, 122), m(615, 122)]} c={CY} w={1.1} />
      <Poly pts={[m(-159, 1014), m(708, 147), m(600, 147)]} c={PU} />
      {branches.map(([y, a, b]) => <Branch key={y} m={m} y={y} x0={a} x1={b} />)}
      {units.map(([x, y]) => <UnitTag key={x} m={m} bx={x} by={y} text="LFC400C" />)}
      <UnitTag m={m} bx={585} by={128} text="" />
      <Poly pts={[m(513, 268), m(513, 470)]} c={PU} w={1.6} />
      <Poly pts={[m(522, 268), m(522, 470)]} c={CY} w={1.4} />
      <Poly pts={[m(490, 345), m(520, 345)]} c={CY} w={1.2} />
      <path d={`M${m(508, 268).join(' ')}h7M${m(508, 470).join(' ')}h7`} stroke={WH} strokeWidth="1" />
      {poles.map(([x, t, b]) => { const [px, py] = m(x, t); return <TagPole key={x} x={px} top={py} bottom={m(x, b)[1]} /> })}
      <SmallText $c={GR} x={m(558, 172)[0]} y={m(558, 172)[1]} fontSize="6.5" textAnchor="middle">LGAC02A</SmallText>
      <Poly pts={[m(512, 200), m(532, 182)]} c={CY} w={1} />
    </g>
  )
}

const FAN_ROW = [[504, 504], [557, 555], [605, 601], [670, 666], [716, 710], [783, 777], [827, 821], [894, 888], [950, 945], [997, 992]]
const ROW_POLES = [536, 582, 638, 689, 743, 804, 861, 918, 983]

const FanRow = () => (
  <g>
    <Poly pts={[[442, 622], [452, 610], [504, 610]]} c={RD} />
    <Poly pts={[[443, 625], [453, 615], [504, 615]]} c={VI} />
    <Poly pts={[[444, 628], [454, 618], [500, 618]]} c={PU} w={1} />
    <Ahu x={431} y={632} />
    <GreenTag x={446} y={634} text="LFC400C" />
    <path d="M458 633h8" stroke={CY} strokeWidth="1" />
    <Poly pts={[[510, 617], [1000, 617]]} c={RD} />
    <Poly pts={[[490, 620], [1000, 620]]} c={CY} w={1.1} />
    <Poly pts={[[505, 625], [998, 625]]} c={PU} w={2} />
    <Poly pts={[[515, 615], [515, 647]]} c={PU} w={1.2} />
    {FAN_ROW.map(([x, bx], i) => (
      <g key={x}>
        <Poly pts={[[x, 620], [x - 25, 647], [x + 4, 647]]} c={PU} />
        <Poly pts={[[x - 5, 620], [x - 27, 644]]} c={VI} w={1} />
        <Ahu x={bx} y={640} sy={0.8} />
        <SmallText $c={GR} $sw={0.05} x={bx} y={653} fontSize="7.6" letterSpacing="0.1" textAnchor="middle">{i < 4 ? 'LFC600C' : 'LFC500C'}</SmallText>
        <path d={`M${bx - 15} 662l6-6`} stroke={CY} strokeWidth="1" />
      </g>
    ))}
    {ROW_POLES.map(x => <TagPole key={x} x={x} top={598} bottom={627} />)}
    <TagPole x={467} top={580} bottom={618} />
    <TagPole x={510} top={578} bottom={607} lines={['DN50', 'L=2.5']} />
    <TagPole x={953} top={577} bottom={607} lines={['DN70', 'L=2.5']} />
    <GreenTag x={517} y={597} text="LFC" />
    <GreenTag x={961} y={597} text="LFC" />
  </g>
)

const TrunkLabel = ({ x, y, rot = 0, children }) => (
  <SmallText x={x} y={y} fontSize="5.6" textAnchor="middle" transform={rot ? `rotate(${rot} ${x} ${y})` : undefined}>{children}</SmallText>
)

const Trunk = () => {
  const m = (x, y) => [450 + x / 2.24, 700 + y / 3]
  const at = (x, y) => { const [a, b] = m(x, y); return { x: a, y: b } }
  return (
    <g>
      <Poly pts={[m(790, 650), m(790, 725), m(18, 725), m(258, 408), m(330, 408), m(580, 75), m(600, 75), m(600, 110)]} c={RD} w={1.7} />
      <Poly pts={[m(810, 650), m(810, 725), m(1020, 725), m(1505, 78), m(1530, 78)]} c="#17b8b8" w={1.6} />
      <Poly pts={[m(1525, 60), m(1525, 110)]} c="#17b8b8" w={1.4} />
      <Poly pts={[m(790, 650), m(848, 590), m(950, 590)]} c={WH} w={1} />
      <Poly pts={[m(810, 650), m(848, 590)]} c={WH} w={1} />
      <path d={`M${m(40, 680).join(' ')}l6 5M${m(58, 680).join(' ')}l-6 5M${m(1040, 680).join(' ')}l6 5M${m(1056, 680).join(' ')}l-6 5`} stroke={GR} strokeWidth="2" />
      <rect {...at(590, 40)} width="6" height="8" fill="#f3ead0" />
      <rect {...at(600, 38)} width="3" height="14" fill={Y} />
      <rect {...at(1512, 35)} width="6" height="8" fill="#f3ead0" />
      <rect {...at(1522, 33)} width="3" height="14" fill={Y} />
      <path d={`M${m(594, 110).join(' ')}h6M${m(1518, 112).join(' ')}h7`} stroke={WH} strokeWidth="1" />
      <TrunkLabel {...at(575, 70)}>DN200</TrunkLabel>
      <TrunkLabel {...at(1546, 72)}>DN200</TrunkLabel>
      <TrunkLabel {...at(445, 232)} rot={-52}>DN200</TrunkLabel>
      <TrunkLabel {...at(135, 552)} rot={-52}>DN200</TrunkLabel>
      <TrunkLabel {...at(1268, 368)} rot={-52}>DN200</TrunkLabel>
      <TrunkLabel {...at(305, 393)}>DN200</TrunkLabel>
      <TrunkLabel {...at(430, 722)}>DN200</TrunkLabel>
      <TrunkLabel {...at(945, 720)}>DN200</TrunkLabel>
      <TrunkLabel {...at(783, 690)} rot={-90}>DN200</TrunkLabel>
      <TrunkLabel {...at(805, 685)} rot={-90}>DN200</TrunkLabel>
      <SmallText {...at(900, 582)} fontSize="6.2" textAnchor="middle">接屋顶风冷热泵</SmallText>
      <SmallText x="751" y="977" fontSize="11" textAnchor="middle">四层中央空调主干管系统图</SmallText>
      <line x1="680" y1="982" x2="819" y2="982" stroke={WH} strokeWidth="3" />
      <SmallText x="746" y="690" fontSize="11" textAnchor="middle">四层中央空调系统图</SmallText>
      <line x1="680" y1="694" x2="819" y2="694" stroke="#d8d8d8" strokeWidth="3" />
    </g>
  )
}

const BLOCK_V = [620, 716.6, 813, 849, 883, 917.5, 952.5, 987, 1021.5, 1056.6, 1097, 1209, 1222, 1361, 1380, 1409]
const BLOCK_CELLS = [[831, '审 定'], [866, '审 核'], [900, '工程主持'], [935, '校 对'], [970, '设 计'], [1004, '制 图'], [1039, '日 期'], [1077, '建设单位']]

const TitleBlock = () => (
  <g>
    <path d="M620 1012H1409M813 1021H1209M1361 1021H1409" stroke={WH} strokeWidth="1" fill="none" />
    {BLOCK_V.map(x => <line key={x} x1={x} y1="1012" x2={x} y2="1032" stroke={WH} strokeWidth="1" />)}
    {BLOCK_CELLS.map(([x, t]) => <SmallText key={x} x={x} y="1019" fontSize="6.4" textAnchor="middle">{t}</SmallText>)}
    <SmallText x="1039" y="1029" fontSize="5.6" textAnchor="middle">2006.8.18</SmallText>
    <SmallText x="1077" y="1029" fontSize="6.4" textAnchor="middle">工程名称</SmallText>
    <SmallText x="1285" y="1026" fontSize="8.2" textAnchor="middle">四层中央空调系统图</SmallText>
    <SmallText x="1370" y="1019" fontSize="6" textAnchor="middle">比 例</SmallText>
    <SmallText x="1370" y="1029" fontSize="6" textAnchor="middle">图 号</SmallText>
    <SmallText x="1395" y="1029" fontSize="5.4" textAnchor="middle">暖施-11/11</SmallText>
  </g>
)

const GRID_X = [271, 278, 285]
const GRID_Y = [270, 281, 297, 315, 333, 350, 420, 428, 436]

const Sheet = ({ ox, y0, y1, right, inner0, inner1, grid1 }) => (
  <g fill="none" stroke={CY}>
    <path d={y1 ? `M${right} ${y0}H${ox}V${y1}H${right}` : `M${right} ${y0}H${ox}V1150`} strokeWidth="1.5" />
    <path d={inner1 ? `M${right} ${inner0}H${ox + 35}V${inner1}H${right}` : `M${right} ${inner0}H${ox + 35}V1150`} strokeWidth="2.6" />
    <path d={`M${ox + 6} ${inner0}V${grid1}H${ox + 35}`} strokeWidth="1.2" />
    {GRID_X.map(x => <line key={x} x1={x - 258 + ox} y1={inner0} x2={x - 258 + ox} y2={grid1} strokeWidth="1.1" />)}
    {GRID_Y.filter(y => y - 237 + inner0 < grid1).map(y => (
      <line key={y} x1={ox + 6} y1={y - 237 + inner0} x2={ox + 35} y2={y - 237 + inner0} strokeWidth="1" />
    ))}
  </g>
)

const MARKS = [507, 555, 602, 653, 704, 760, 816, 862, 914, 960, 1020, 1060, 1101, 1135, 1156]

const CadDrawing = () => (
  <Drawing viewBox="30 123 1537 1021">
    <path d="M258 223H1423V1045H258Z" fill="none" stroke={CY} strokeWidth="1.6" />
    <path d="M293 237H1409V1032H293Z" fill="none" stroke={CY} strokeWidth="2.6" />
    <Sheet ox={258} y0={223} y1={1045} right={293} inner0={237} inner1={1032} grid1={445} />
    <Sheet ox={1464} y0={223} y1={1045} right={1570} inner0={237} inner1={1032} grid1={445} />
    <Sheet ox={258} y0={1109} right={1570} inner0={1122} grid1={1150} />
    <SmallText x="270" y="330" fontSize="6" textAnchor="middle">暖通</SmallText>
    <SmallText x="270" y="428" fontSize="6" textAnchor="middle">暖通</SmallText>
    <SmallText x="1477" y="330" fontSize="6" textAnchor="middle">暖通</SmallText>
    <SmallText x="1477" y="428" fontSize="6" textAnchor="middle">暖通</SmallText>
    {MARKS.map(x => <path key={x} d={`M${x - 3} 1145a3 3 0 0 1 6 0`} fill="none" stroke="#30c860" strokeWidth="1.6" />)}
    <Ahu x={1553} y={563} />
    <GreenTag x={1562} y={568} text="LF" />
    <LeftSystem />
    <RightSystem />
    <FanRow />
    <Trunk />
    <TitleBlock />
    <line x1="1454.5" y1="123" x2="1454.5" y2="1144" stroke="#e6e6e6" strokeWidth="1" />
    <line x1="30" y1="1096.5" x2="1567" y2="1096.5" stroke="#e6e6e6" strokeWidth="1" />
    <rect x="1449" y="1091" width="11" height="11" fill="#212831" stroke="#e6e6e6" strokeWidth="1" />
    <path d="M55 1072V1118M55 1118H101" fill="none" stroke="#e0e0e0" strokeWidth="1" />
    <rect x="51.5" y="1114" width="8" height="8" fill="none" stroke="#e0e0e0" strokeWidth="1" />
    <path d="M56 1056L62 1062L68 1056M62 1062V1068M105 1106L116 1118M116 1106L105 1118" fill="none" stroke="#e0e0e0" strokeWidth="1" />
  </Drawing>
)

const WATERMARKS = [[21, 383], [572, 383], [1123, 383], [-129, 753], [422, 753], [973, 753], [1524, 753], [-279, 1123], [272, 1123], [823, 1123], [1374, 1123]]

const StatusItems = [
  [['grid', 22], ['dots', 22], ['caretS', 18]],
  [['ortho', 21], ['polar', 21], ['caretS', 18], ['iso', 20], ['caretS', 17], ['snapang', 22], ['osnap', 21, true], ['caretS', 13]],
  [['lwt', 22]],
  [['anno', 21, true], ['anno2', 21], ['anno3', 22], ['1:1', 20], ['caretS', 13]],
  [['gear', 24], ['caretS', 15]],
  [['plus', 21]],
  [['isodraft', 23], ['hw', 23], ['clean', 22]],
  [['iso2', 24], ['custom', 23]],
]

export default function App() {
  return (
    <>
      <GlobalStyle />
      <Root>
        <TitleBar>
          <QuickAccess>
            <Cell $w={20}><Icon name="logo" size={18} /></Cell>
            <Cell $w={12}><Icon name="caret" size={10} /></Cell>
            <Cell $w={22} $ml={10}><Icon name="newf" /></Cell>
            <Cell $w={22}><Icon name="open" /></Cell>
            <Cell $w={22}><Icon name="save" /></Cell>
            <Cell $w={22}><Icon name="saveas" /></Cell>
            <Cell $w={22}><Icon name="sheet" /></Cell>
            <Cell $w={22}><Icon name="sheetout" /></Cell>
            <Cell $w={22}><Icon name="print" /></Cell>
            <Cell $w={22}><Icon name="undo" /></Cell>
            <Cell $w={12}><Icon name="caret" size={9} /></Cell>
            <Cell $w={22}><Icon name="redoD" /></Cell>
            <Cell $w={11}><Icon name="caret" size={9} /></Cell>
            <Cell $w={14}><Icon name="menuC" size={11} /></Cell>
            <Cell $w={22}><Icon name="share" /></Cell>
            <ShareText>共享</ShareText>
          </QuickAccess>
          <TitleSlot>
            <TitleApp>Autodesk AutoCAD 2022</TitleApp>
            <span>某酒店中央空调图纸.dwg</span>
          </TitleSlot>
          <Arrow />
          <SearchBox>键入关键字或短语</SearchBox>
          <Cell $w={20} $ml={2}><Icon name="search" size={15} /></Cell>
          <Cell $w={22} $ml={1}><Icon name="user" size={16} /></Cell>
          <UserName>1505999135...</UserName>
          <Cell $w={10}><Icon name="caret" size={9} /></Cell>
          <Cell $w={22} $ml={3}><Icon name="cart" size={15} /></Cell>
          <Cell $w={22}><Icon name="aIcon" size={15} /></Cell>
          <Cell $w={8}><Icon name="caret" size={9} /></Cell>
          <VRule />
          <Cell $w={20}><Icon name="help" size={16} /></Cell>
          <Cell $w={12}><Icon name="caret" size={9} /></Cell>
          <WinControls>
            <WinBtn><MinGlyph /></WinBtn>
            <WinBtn><MaxGlyph /></WinBtn>
            <WinBtn $w={22}><Icon name="close" size={14} color="#eceef0" /></WinBtn>
          </WinControls>
        </TitleBar>
        <MenuBar>
          {MENU.map(m => <MenuItem key={m}>{m}</MenuItem>)}
          <WinControls>
            <WinBtn $w={17}><MinGlyph $w={7} /></WinBtn>
            <WinBtn $w={17}><RestoreGlyph /></WinBtn>
            <WinBtn $w={17}><Icon name="close" size={13} color="#eceef0" /></WinBtn>
          </WinControls>
        </MenuBar>
        <TabBar>
          <Tab $w={121} $pl={17}>开始</Tab>
          <Tab $w={145} $pl={10} $active>
            某酒店中央空调图纸*
            <TabClose><Icon name="close" size={11} color="#a9afb8" /></TabClose>
          </Tab>
          <Tab $w={22} $ml={4}><Cell $w={22}><Icon name="plus" size={9} color="#a9afb8" /></Cell></Tab>
        </TabBar>
        <Band>
          <BandRow $h={25}>
            <Toolbar $w={975}>
              {renderTools(ROW1)}
              <Drop $w={278} $pl={3}>
                <Cell $w={17}><Icon name="bulb" size={16} /></Cell>
                <Cell $w={15}><Icon name="sun" size={16} /></Cell>
                <Cell $w={18}><Icon name="freeze" size={16} /></Cell>
                <Cell $w={18}><Icon name="lock" size={16} /></Cell>
                <DropSwatch $r={5} />
                <span>ACS_COM</span>
                <ChevronDown />
              </Drop>
              <Cell><Icon name="lay1" /></Cell>
              <Cell><Icon name="lay2" /></Cell>
              <Cell><Icon name="lay3" /></Cell>
            </Toolbar>
            <Grip $w={5} />
            <Drop $w={138}><DropSwatch /><span>ByLayer</span><ChevronDown /></Drop>
            <Grip $w={5} />
            <Drop $w={148}><DropLine $w={56} $l={3} $r={5} /><span>ByLayer</span><ChevronDown /></Drop>
            <Grip $w={6} />
            <Drop $w={115}><DropLine $w={33} $l={3} $r={5} /><span>ByLayer</span><ChevronDown /></Drop>
            <Grip $w={5} />
            <Drop $w={110} $pl={9} $muted>ByColor<ChevronDown color="#aaa" /></Drop>
          </BandRow>
          <BandRow $h={21}>
            <Toolbar $w={1118}>
              {renderTools(ROW2A)}
              <Drop $w={111} $h={19} $pl={18}><span>DIMN</span><ChevronDown /></Drop>
              {renderTools(ROW2B)}
            </Toolbar>
          </BandRow>
        </Band>
        <Main>
          <Rail $w={28} $pl={3} $pr={3}>
            <RailTools>
              <RailGrip />
              {LEFT_TOOLS.map(t => <RailCell key={t}><Icon name={t} /></RailCell>)}
            </RailTools>
          </Rail>
          <Canvas>
            <CadDrawing />
            <ViewTag>[-][俯视][二维线框]</ViewTag>
            <CubeRing />
            <CubeFace>上</CubeFace>
            <CubeDir $x={1452} $y={16}>北</CubeDir>
            <CubeDir $x={1399} $y={67}>西</CubeDir>
            <CubeDir $x={1504} $y={67}>东</CubeDir>
            <CubeDir $x={1452} $y={120}>南</CubeDir>
            <WcsPill>WCS</WcsPill>
          </Canvas>
          <Rail $w={31} $pl={4} $pr={5}>
            <RailTools>
              <RailGrip />
              {RIGHT_TOOLS.map(t => <RailCell key={t}><Icon name={t} /></RailCell>)}
            </RailTools>
          </Rail>
        </Main>
        <Command>
          <CmdSide>
            <CmdGrip />
            <CmdSideBtn $h={20}><Icon name="close" size={13} color="#e8eaee" /></CmdSideBtn>
            <CmdSideBtn $h={22}><Icon name="wrench" size={14} /></CmdSideBtn>
          </CmdSide>
          <CmdCol>
            <CmdHistory>选择注释对象或 [放弃(U)/模式(M)]: *取消*</CmdHistory>
            <CmdInput>
              <Icon name="cmdbox" size={15} />
              <Icon name="caretS" size={9} />
              <CmdPrompt>键入命令</CmdPrompt>
            </CmdInput>
          </CmdCol>
        </Command>
        <StatusBar>
          <LayoutTabs>
            <LayoutTab $w={41} $active>模型</LayoutTab>
            <LayoutTab $w={46}>布局1</LayoutTab>
            <LayoutTab $w={20}>+</LayoutTab>
          </LayoutTabs>
          <StatusTools>
            <StatusGroup><StatusLabel $w={26}>模型</StatusLabel></StatusGroup>
            {StatusItems.map((g, i) => (
              <StatusGroup key={i}>
                {g.map(([n, w, on], j) => (
                  <StatusCell key={j} $w={w} $on={on}>
                    {n === '1:1' ? n : <Icon name={n} size={n === 'caretS' ? 10 : 16} />}
                  </StatusCell>
                ))}
              </StatusGroup>
            ))}
          </StatusTools>
        </StatusBar>
        {WATERMARKS.map(([x, y]) => (
          <Watermark key={`${x}-${y}`} style={{ left: x - 2, top: y - 40 }}>知末网 www.znzmo.com</Watermark>
        ))}
        <BrandMark>知末</BrandMark>
        <BrandId>ID: 1160284292</BrandId>
      </Root>
    </>
  )
}
